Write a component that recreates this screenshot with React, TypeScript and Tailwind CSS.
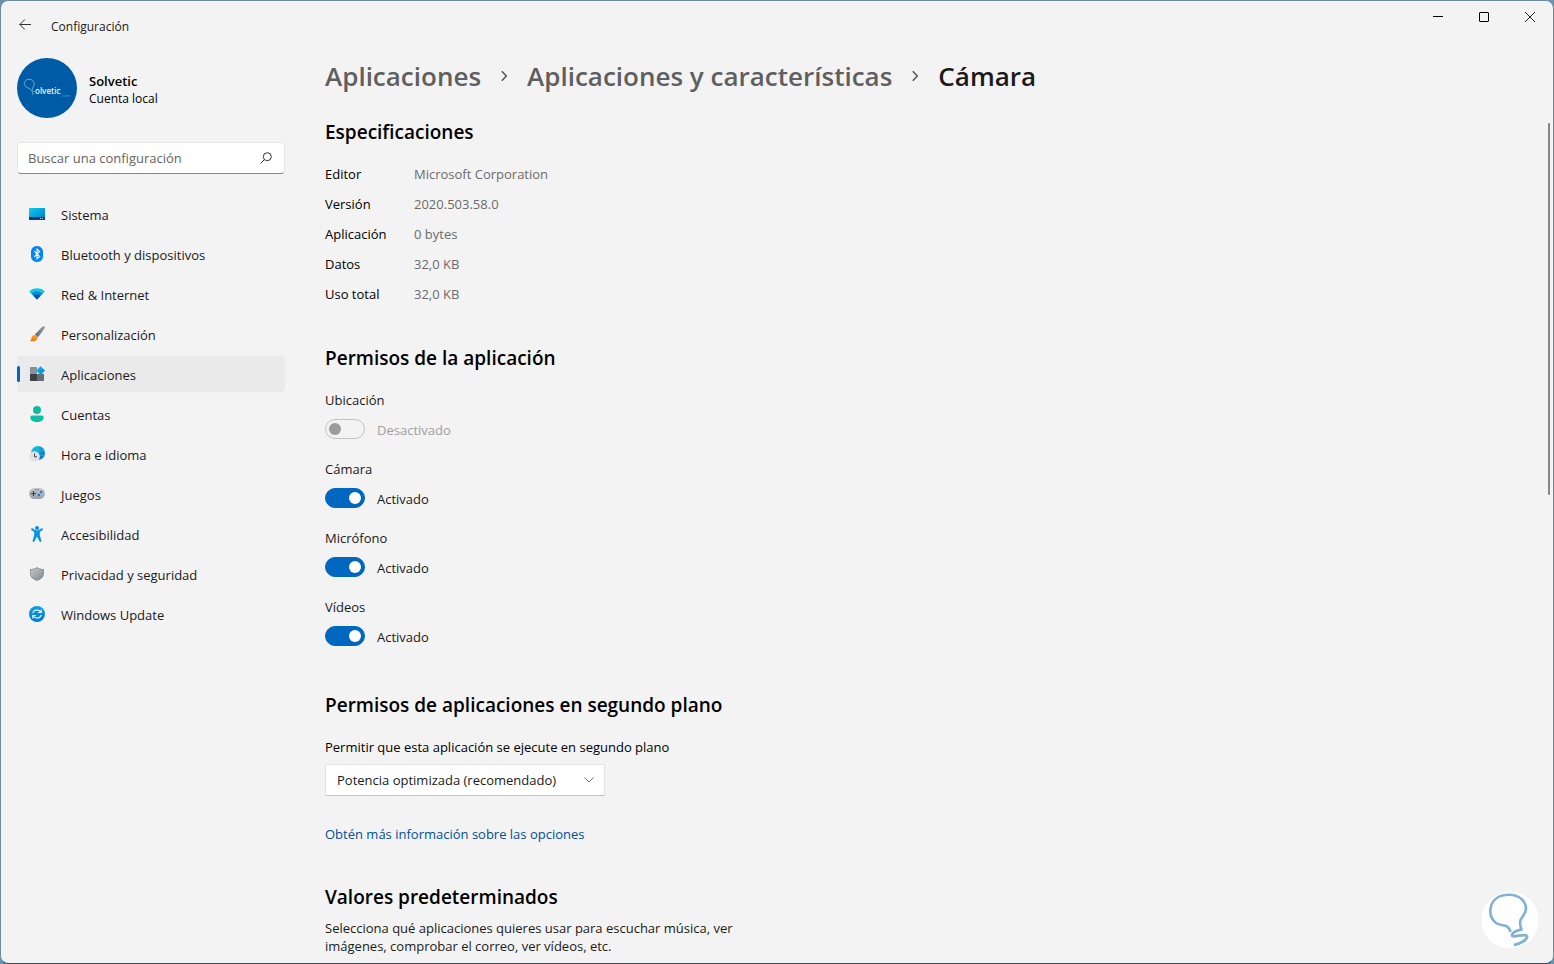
import { useState } from 'react';
import type { ReactNode } from 'react';

type NavItem = { label: string; icon: ReactNode };

const ICON = 'size-4 shrink-0';

function SystemIcon() {
  return (
    <svg viewBox="0 0 16 16" className={ICON} aria-hidden="true">
      <defs>
        <linearGradient id="sys" x1="0" y1="0" x2="1" y2="1">
          <stop offset="0" stopColor="#0bd0ea" />
          <stop offset="1" stopColor="#0078d0" />
        </linearGradient>
      </defs>
      <rect x="0" y="2" width="16" height="12" rx="0.6" fill="url(#sys)" />
      <path d="M0 11h16v2.4a.6.6 0 0 1-.6.6H.6a.6.6 0 0 1-.6-.6z" fill="#153a7c" />
      <path d="M11 12h1v1h-1zM13 12h1v1h-1z" fill="#c9d8f0" />
    </svg>
  );
}

function BluetoothIcon() {
  return (
    <svg viewBox="0 0 16 16" className={ICON} aria-hidden="true">
      <rect x="2" y="0" width="12" height="16" rx="5.6" fill="#0086fb" />
      <path d="M5.2 5.2 10.6 10.4 8 12.8V3.2l2.6 2.4-5.4 5.2" fill="none" stroke="#fff" strokeWidth="1.1" />
    </svg>
  );
}

function NetworkIcon() {
  return (
    <svg viewBox="0 0 16 16" className={ICON} aria-hidden="true">
      <path d="M.2 5.4C2.2 3.200 4.900 2.200 8 2.200s5.800 1 7.800 3.200L8 13.400z" fill="#10c8e8" />
      <path d="M2.300 7.500C3.900 6 5.800 5.400 8 5.400s4.100.6 5.700 2.100L8 13.400z" fill="#0c8ad8" />
      <path d="M4.600 9.800C5.500 9 6.700 8.600 8 8.600s2.500.4 3.400 1.200L8 13.400z" fill="#0b56a8" />
    </svg>
  );
}

function BrushIcon() {
  return (
    <svg viewBox="0 0 16 16" className={ICON} aria-hidden="true">
      <defs>
        <linearGradient id="handle" x1="1" y1="0" x2="0" y2="1">
          <stop offset="0" stopColor="#98a2aa" />
          <stop offset="1" stopColor="#5c6770" />
        </linearGradient>
        <linearGradient id="bristle" x1="0" y1="0" x2="0" y2="1">
          <stop offset="0" stopColor="#ffa52e" />
          <stop offset="1" stopColor="#f07010" />
        </linearGradient>
      </defs>
      <path d="M15.500.4c.7.600.3 1.500-.2 2.300L9 11.200 5.900 8.400 13 1.100c.8-.8 1.800-1.300 2.500-.7z" fill="url(#handle)" />
      <path d="M4.800 9c1.800-.5 3.900 1.200 3.500 3.200-.5 2.600-3.800 3.600-7.700 3 1.300-.7 1.500-1.700 1.800-3C2.700 10.600 3.500 9.400 4.800 9z" fill="url(#bristle)" />
    </svg>
  );
}

function AppsIcon() {
  return (
    <svg viewBox="0 0 16 16" className={ICON} aria-hidden="true">
      <defs>
        <linearGradient id="diamond" x1="0" y1="0" x2="1" y2="1">
          <stop offset="0" stopColor="#12c4ee" />
          <stop offset="1" stopColor="#0a78d6" />
        </linearGradient>
      </defs>
      <path d="M1.500 1H8v7H1V1.500z" fill="#8a9299" />
      <path d="M1 8h7v7H1.500L1 14.500z" fill="#3d4144" />
      <path d="M8 8h7v6.500l-.5.5H8z" fill="#676d72" />
      <path d="M11.600.2 16 4.600 11.600 9 7.200 4.600z" fill="url(#diamond)" />
    </svg>
  );
}

function AccountIcon() {
  return (
    <svg viewBox="0 0 16 16" className={ICON} aria-hidden="true">
      <circle cx="8" cy="4" r="4" fill="#10b89e" />
      <path d="M3 9.500h10a1.700 1.700 0 0 1 1.700 1.700C14.700 14.300 12 16 8 16s-6.700-1.700-6.700-4.800A1.700 1.700 0 0 1 3 9.500z" fill="#0fbfa3" />
    </svg>
  );
}

function TimeIcon() {
  return (
    <svg viewBox="0 0 16 16" className={ICON} aria-hidden="true">
      <defs>
        <linearGradient id="globe" x1="0" y1="0" x2="1" y2="1">
          <stop offset="0" stopColor="#16cbe8" />
          <stop offset="1" stopColor="#0869c6" />
        </linearGradient>
      </defs>
      <circle cx="9" cy="7" r="7" fill="url(#globe)" />
      <path d="M3 4.600h12M9 0v14M3 9.400h12" stroke="#45d6f0" strokeWidth="0.500" opacity="0.600" />
      <circle cx="5.500" cy="10.500" r="5.300" fill="#dfe2e4" />
      <path d="M5.500 7.500v3.300H8" fill="none" stroke="#444" strokeWidth="1" />
    </svg>
  );
}

function GamesIcon() {
  return (
    <svg viewBox="0 0 16 16" className={ICON} aria-hidden="true">
      <defs>
        <linearGradient id="pad" x1="0" y1="0" x2="0" y2="1">
          <stop offset="0" stopColor="#c3c9ce" />
          <stop offset="1" stopColor="#9aa2aa" />
        </linearGradient>
      </defs>
      <rect x="0" y="2" width="16" height="11" rx="5.400" fill="url(#pad)" />
      <path d="M4.500 5v5M2 7.500h5" stroke="#3b4046" strokeWidth="1.200" />
      <path d="M6.500 3.300h1v1h-1zM8.800 3.300h1v1h-1z" fill="#4a5056" />
      <circle cx="12.200" cy="6" r="1.200" fill="#1476d2" />
      <circle cx="9.900" cy="9" r="1.200" fill="#1476d2" />
    </svg>
  );
}

function AccessibilityIcon() {
  return (
    <svg viewBox="0 0 16 16" className={ICON} aria-hidden="true">
      <circle cx="8" cy="2" r="2" fill="#0a8ae0" />
      <path
        d="M2.300 2.700c.4-.6 1-.6 1.600-.3C5.200 3.300 6.500 4.400 8 4.400s2.800-1.100 4.100-2c.6-.3 1.200-.3 1.600.3.300.6.200 1.200-.4 1.600L10.800 6v3.200l1.500 5.300c.2.700-.1 1.200-.7 1.400-.6.100-1.100-.2-1.300-.8L8 10.600l-2.300 4.500c-.2.600-.7.900-1.300.8-.6-.2-.9-.7-.7-1.400l1.500-5.300V6L2.700 4.300c-.6-.4-.7-1-.4-1.600z"
        fill="#0a93e6"
      />
    </svg>
  );
}

function ShieldIcon() {
  return (
    <svg viewBox="0 0 16 16" className={ICON} aria-hidden="true">
      <defs>
        <linearGradient id="shield" x1="0" y1="0" x2="1" y2="1">
          <stop offset="0" stopColor="#c3c8cc" />
          <stop offset="1" stopColor="#7f8890" />
        </linearGradient>
      </defs>
      <path d="M8 .9c2 1.400 4.200 2 7 2.200v4.500c0 3.400-2.900 5.900-7 7.500-4.100-1.600-7-4.100-7-7.500V3.100C3.800 2.900 6 2.300 8 .9z" fill="#8b9299" />
      <path d="M8 2c1.800 1.200 3.600 1.800 6.200 2v3.600c0 2.900-2.500 5-6.200 6.500-3.700-1.500-6.200-3.600-6.200-6.500V4C4.400 3.800 6.200 3.200 8 2z" fill="url(#shield)" />
    </svg>
  );
}

function UpdateIcon() {
  return (
    <svg viewBox="0 0 16 16" className={ICON} aria-hidden="true">
      <defs>
        <linearGradient id="upd" x1="0" y1="0" x2="0" y2="1">
          <stop offset="0" stopColor="#0aa3e4" />
          <stop offset="1" stopColor="#0479d4" />
        </linearGradient>
      </defs>
      <circle cx="8" cy="8" r="8" fill="url(#upd)" />
      <path d="M3.800 7.200C4.300 5.200 6 4 8 4c1.600 0 2.800.8 3.700 2M12.200 8.800C11.700 10.800 10 12 8 12c-1.600 0-2.800-.8-3.700-2" fill="none" stroke="#fff" strokeWidth="1.100" />
      <path d="M12.200 3.500v3H9.300M3.800 12.500v-3h2.900" fill="none" stroke="#fff" strokeWidth="1.100" />
    </svg>
  );
}

const navItems: NavItem[] = [
  { label: 'Sistema', icon: <SystemIcon /> },
  { label: 'Bluetooth y dispositivos', icon: <BluetoothIcon /> },
  { label: 'Red & Internet', icon: <NetworkIcon /> },
  { label: 'Personalización', icon: <BrushIcon /> },
  { label: 'Aplicaciones', icon: <AppsIcon /> },
  { label: 'Cuentas', icon: <AccountIcon /> },
  { label: 'Hora e idioma', icon: <TimeIcon /> },
  { label: 'Juegos', icon: <GamesIcon /> },
  { label: 'Accesibilidad', icon: <AccessibilityIcon /> },
  { label: 'Privacidad y seguridad', icon: <ShieldIcon /> },
  { label: 'Windows Update', icon: <UpdateIcon /> },
];

const specs = [
  ['Editor', 'Microsoft Corporation'],
  ['Versión', '2020.503.58.0'],
  ['Aplicación', '0 bytes'],
  ['Datos', '32,0 KB'],
  ['Uso total', '32,0 KB'],
];

const permissions = [
  { id: 'ubicacion', label: 'Ubicación', on: false, disabled: true },
  { id: 'camara', label: 'Cámara', on: true, disabled: false },
  { id: 'microfono', label: 'Micrófono', on: true, disabled: false },
  { id: 'videos', label: 'Vídeos', on: true, disabled: false },
];

function TitleBar() {
  return (
    <header className="flex h-12 shrink-0 items-center">
      <button type="button" aria-label="Atrás" className="flex h-8 w-12 items-center justify-center">
        <svg viewBox="0 0 12 12" className="size-3" fill="none" stroke="#333" aria-hidden="true">
          <path d="M12 5.500H.8M5.800.5l-5 5 5 5" />
        </svg>
      </button>
      <span className="ml-0.5 pt-[3px] text-xs">Configuración</span>
      <div className="ml-auto flex self-start">
        <button type="button" aria-label="Minimizar" className="flex h-8 w-[46px] items-center justify-center">
          <svg viewBox="0 0 10 10" className="size-2.5" stroke="#000" aria-hidden="true">
            <path d="M0 4.500h10" />
          </svg>
        </button>
        <button type="button" aria-label="Maximizar" className="flex h-8 w-[46px] items-center justify-center">
          <svg viewBox="0 0 10 10" className="size-2.5" fill="none" stroke="#000" aria-hidden="true">
            <rect x="0.500" y="0.500" width="9" height="9" rx="0.500" />
          </svg>
        </button>
        <button type="button" aria-label="Cerrar" className="flex h-8 w-[46px] items-center justify-center">
          <svg viewBox="0 0 10 10" className="size-2.5" stroke="#222" aria-hidden="true">
            <path d="M0 0l10 10M10 0 0 10" />
          </svg>
        </button>
      </div>
    </header>
  );
}

function Avatar() {
  return (
    <div className="flex size-[60px] shrink-0 items-center justify-center rounded-full bg-[#005ba7]">
      <svg viewBox="0 0 60 60" className="size-full" aria-hidden="true">
        <path
          d="M14.500 33c-.6-2.200-2-2.500-3.800-3.200C8 28.700 6.600 26 7.800 23.600c1.200-2.200 4-2.900 6.500-1.900 2.800 1.200 3.600 4.200 2.200 6.800-.9 1.700-1.300 2.800-1 4.100M17.500 33.500c-1.700-.6-3.500.6-2 1.300 1.200.5 1.600 1.300-.5 1.700"
          fill="none"
          stroke="#8fbbe0"
          strokeWidth="0.800"
        />
        <text x="18" y="36" fontSize="8" fill="#e8f1fa" fontFamily="Open Sans, sans-serif" fontWeight="600">
          olvetic
        </text>
        <text x="44" y="39" fontSize="4" fill="#6fa3d2" fontFamily="Open Sans, sans-serif">
          .com
        </text>
      </svg>
    </div>
  );
}

function Sidebar() {
  const [current, setCurrent] = useState('Aplicaciones');

  return (
    <aside className="flex w-[284px] shrink-0 flex-col pt-[9px] pl-4">
      <div className="flex items-center gap-3">
        <Avatar />
        <div className="pt-1">
          <p className="text-[13px] leading-[18px] font-semibold text-black">Solvetic</p>
          <p className="text-xs leading-[18px] text-black">Cuenta local</p>
        </div>
      </div>

      <div className="mt-6 flex h-8 items-center rounded border border-[#e5e5e5] border-b-[#868686] bg-white pr-3 pl-2.5">
        <input
          type="search"
          aria-label="Buscar una configuración"
          placeholder="Buscar una configuración"
          className="min-w-0 flex-1 bg-transparent pt-0.5 text-[13px] outline-none placeholder:text-[#646464]"
        />
        <svg viewBox="0 0 12 12" className="size-3 shrink-0" fill="none" stroke="#333" aria-hidden="true">
          <circle cx="7.300" cy="4.700" r="4" />
          <path d="M4.400 7.600.6 11.400" />
        </svg>
      </div>

      <nav className="mt-[22px] flex flex-col gap-1">
        {navItems.map(({ label, icon }) => (
          <button
            key={label}
            type="button"
            onClick={() => setCurrent(label)}
            aria-current={current === label ? 'page' : undefined}
            className={`relative flex h-9 items-center gap-4 rounded pl-3 text-left text-[13px] ${
              current === label ? 'bg-[#eaeaea]' : 'hover:bg-[#eaeaea]'
            }`}
          >
            {current === label && <span className="absolute left-0 h-4 w-[3px] rounded-full bg-[#0067c0]" />}
            {icon}
            <span className="pt-[3px]">{label}</span>
          </button>
        ))}
      </nav>
    </aside>
  );
}

function Crumbs() {
  const chevron = (
    <svg viewBox="0 0 8 12" className="h-3 w-2 shrink-0" fill="none" stroke="#555" strokeWidth="1.500" aria-hidden="true">
      <path d="M1.800 1.200 6.300 6l-4.500 4.800" />
    </svg>
  );

  return (
    <nav aria-label="Ruta" className="flex items-center gap-[19px] text-[26px] leading-9 font-semibold whitespace-nowrap">
      <a href="#aplicaciones" className="text-[#5f5f5f]">Aplicaciones</a>
      {chevron}
      <a href="#caracteristicas" className="text-[#5f5f5f]">Aplicaciones y características</a>
      {chevron}
      <h1 className="text-[#1a1a1a]">Cámara</h1>
    </nav>
  );
}

function Toggle({ id, label, on, disabled }: (typeof permissions)[number]) {
  const [checked, setChecked] = useState(on);

  return (
    <div>
      <label htmlFor={id} className="block leading-5">{label}</label>
      <div className="mt-[9px] flex h-5 items-center gap-3">
        <input
          id={id}
          type="checkbox"
          role="switch"
          checked={checked}
          disabled={disabled}
          onChange={(e) => setChecked(e.target.checked)}
          className="flex h-5 w-10 appearance-none items-center rounded-full border border-[#8a8a8a] px-[3px] before:size-3 before:rounded-full before:bg-[#5f5f5f] checked:justify-end checked:border-[#0067c0] checked:bg-[#0067c0] checked:before:bg-white disabled:border-[#c3c3c3] disabled:before:bg-[#9b9b9b]"
        />
        <span className={disabled ? 'pt-[3px] text-[#a0a0a0]' : 'pt-[3px]'}>{checked ? 'Activado' : 'Desactivado'}</span>
      </div>
    </div>
  );
}

function Details() {
  return (
    <main className="min-w-0 flex-1 pt-[9px] pl-10 text-[13px]">
      <Crumbs />

      <h2 className="mt-6 text-[19px] leading-7 font-semibold text-black">Especificaciones</h2>
      <table className="mt-[14px] text-left">
        <tbody>
          {specs.map(([name, value]) => (
            <tr key={name} className="h-[30px]">
              <th scope="row" className="w-[89px] font-normal text-black">{name}</th>
              <td className="text-[#6b6b6b]">{value}</td>
            </tr>
          ))}
        </tbody>
      </table>

      <h2 className="mt-[34px] text-[19px] leading-7 font-semibold text-black">Permisos de la aplicación</h2>
      <div className="mt-[18px] flex flex-col gap-5">
        {permissions.map((p) => (
          <Toggle key={p.id} {...p} />
        ))}
      </div>

      <h2 className="mt-[45px] text-[19px] leading-7 font-semibold text-black">
        Permisos de aplicaciones en segundo plano
      </h2>
      <label htmlFor="segundo-plano" className="mt-[18px] block leading-5 text-black">
        Permitir que esta aplicación se ejecute en segundo plano
      </label>
      <div className="relative mt-[7px] w-[280px]">
        <select
          id="segundo-plano"
          className="h-8 w-full appearance-none border border-[#e3e3e3] border-b-[#c4c4c4] bg-white pt-0.5 pl-[11px] outline-none"
        >
          <option>Potencia optimizada (recomendado)</option>
        </select>
        <svg viewBox="0 0 10 6" className="pointer-events-none absolute top-[13px] right-[11px] h-1.5 w-2.5" fill="none" stroke="#777" aria-hidden="true">
          <path d="M.5.5 5 5 9.500.5" />
        </svg>
      </div>
      <a href="#opciones" className="mt-7 block w-fit leading-5 text-[#004e98]">
        Obtén más información sobre las opciones
      </a>

      <h2 className="mt-[39px] text-[19px] leading-7 font-semibold text-black">Valores predeterminados</h2>
      <p className="mt-2 max-w-[420px] leading-[18px]">
        Selecciona qué aplicaciones quieres usar para escuchar música, ver imágenes, comprobar el correo, ver vídeos,
        etc.
      </p>
    </main>
  );
}

export default function App() {
  return (
    <div className="h-screen bg-[#6c93ad] font-['Open_Sans','Noto_Sans',sans-serif] text-[#1a1a1a]">
      <div className="relative flex h-full flex-col overflow-hidden rounded-lg border border-[#6b8ca1] border-b-[#24507a] bg-[#f3f3f3]">
        <TitleBar />
        <div className="flex min-h-0 flex-1">
          <Sidebar />
          <Details />
        </div>
        <div className="absolute top-[122px] right-[3px] h-[372px] w-0.5 rounded-full bg-[#868686]" />
        <svg viewBox="0 0 58 58" className="absolute right-3.5 bottom-3.5 size-[58px]" fill="none" aria-hidden="true">
          <circle cx="29" cy="29" r="28.500" fill="#fff" />
          <path
            d="M29.600 41C28.500 37.500 27.500 36 24.500 34.800 21.500 33.600 18 34.200 15 32 10 28 8.500 22 9.800 16 11.800 8 19 3.800 28 3.800c10 0 17 6 17 14.500C44.500 23.500 40 26 39.200 30.500c-.5 3 .2 5 1.300 8"
            stroke="#7fb2d5"
            strokeWidth="2.600"
          />
          <path
            d="M41.500 38.300C37 38.800 31.500 41 31 44c-.3 3.800 13.500-2.400 15 1.200.8 3.300-6 7.200-13 9"
            stroke="#7fb2d5"
            strokeWidth="2.800"
          />
        </svg>
      </div>
    </div>
  );
}
